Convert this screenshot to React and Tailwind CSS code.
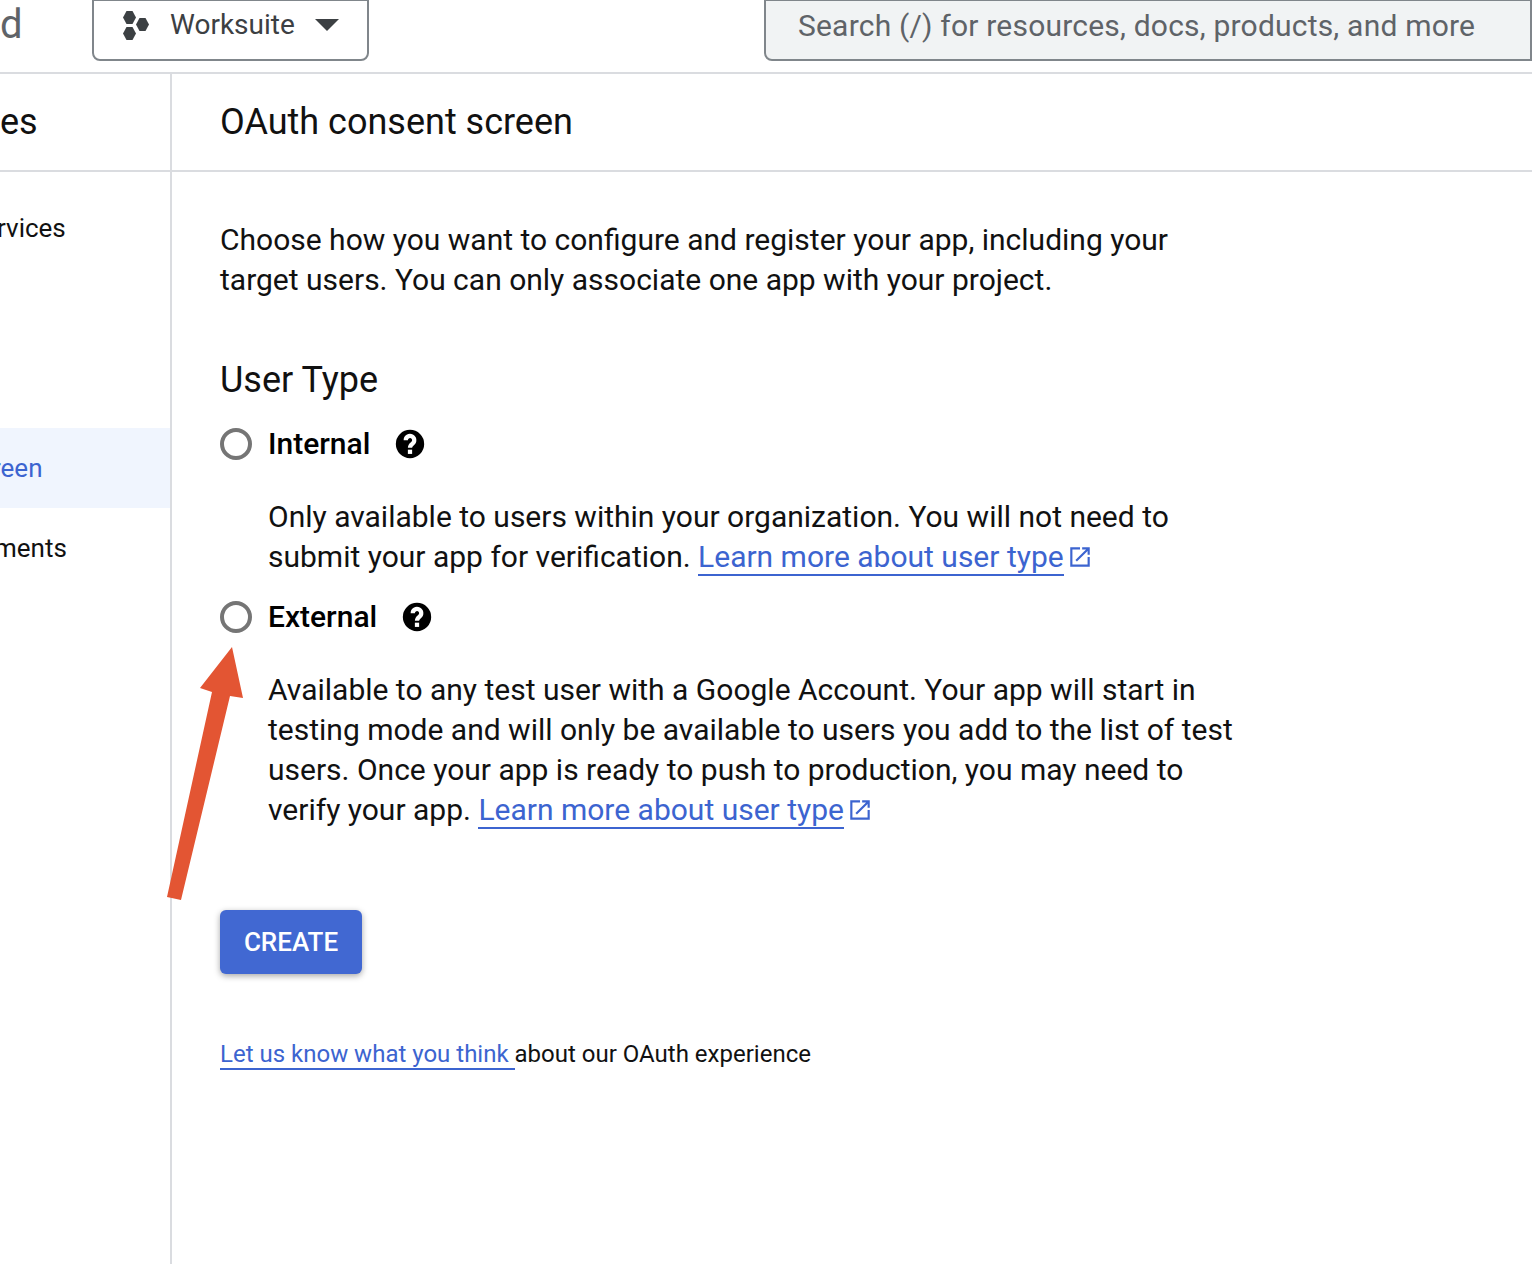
function HelpIcon() {
  return (
    <svg width="34" height="34" viewBox="0 0 24 24">
      <circle cx="12" cy="12" r="10" fill="#000" />
      <path d="M9 9.4a3 3 0 1 1 4.7 2.4c-1.1.8-1.7 1.4-1.7 2.9" fill="none" stroke="#fff" strokeWidth="3" />
      <rect x="10.5" y="16" width="3" height="3" fill="#fff" />
    </svg>
  );
}

function OpenInNew() {
  return (
    <svg className="inline-block ml-[3px] align-[-3px]" width="26" height="26" viewBox="0 0 24 24" fill="#3c64d0">
      <path d="M19 19H5V5h7V3H3v18h18v-9h-2v7zM14 3v2h3.59l-9.83 9.83 1.41 1.41L19 6.41V10h2V3h-7z" />
    </svg>
  );
}

function Radio({ label }) {
  return (
    <div className="flex items-center h-[40px]">
      <div className="w-8 h-8 rounded-full border-[4px] border-[#757575]" />
      <span className="ml-4 text-[30px] font-medium text-black">{label}</span>
      <span className="ml-[23px]">
        <HelpIcon />
      </span>
    </div>
  );
}

function LearnMore() {
  return (
    <>
      <a className="text-[#3c64d0] border-b-2 border-[#3c64d0]">Learn more about user type</a>
      <OpenInNew />
    </>
  );
}

export default function App() {
  return (
    <div className="relative h-[1264px] w-[1532px] overflow-hidden bg-white font-['Roboto',sans-serif] text-[#111]">
      <header className="flex h-[74px] border-b-2 border-[#dadce0]">
        <div className="w-[92px] text-[40px] leading-[50px] text-[#5f6368]">d</div>
        <div className="flex items-center w-[277px] h-[62px] -mt-[1px] border-2 border-[#80868b] rounded-b-[8px] pl-[28px] pb-[10px]">
          <svg width="28" height="30" viewBox="0 0 28 30" fill="#3c4043">
            <path d="M0 6.5L3.5 0h6L13 6.5 9.5 13h-6z" transform="translate(1 1)" />
            <path d="M0 6.5L3.5 0h6L13 6.5 9.5 13h-6z" transform="translate(14 8)" />
            <path d="M0 6.5L3.5 0h6L13 6.5 9.5 13h-6z" transform="translate(1 17)" />
          </svg>
          <span className="ml-[20px] text-[28px] text-[#3c4043]">Worksuite</span>
          <svg className="ml-[20px]" width="24" height="12" viewBox="0 0 24 12" fill="#3c4043">
            <path d="M0 0h24L12 12z" />
          </svg>
        </div>
        <div className="ml-[395px] flex-1 h-[62px] -mt-[1px] bg-[#f1f3f4] border-2 border-[#80868b] rounded-bl-[8px] pl-[32px] pb-[10px] flex items-center text-[30px] tracking-[0.2px] text-[#5f6368] whitespace-nowrap overflow-hidden">
          Search (/) for resources, docs, products, and more
        </div>
      </header>

      <div className="flex h-[1190px]">
        <aside className="w-[172px] shrink-0 border-r-2 border-[#dadce0] overflow-hidden whitespace-nowrap">
          <div className="h-[98px] border-b-2 border-[#dadce0] text-[36px] leading-[96px]">es</div>
          <div className="h-[256px] pt-[36px] text-[26px] leading-[40px] -ml-[3px]">rvices</div>
          <div className="h-[80px] bg-[#f0f5fe] text-[26px] leading-[80px] text-[#3c64d0]">
            <span className="-ml-[8px] inline-block">reen</span>
          </div>
          <div className="h-[80px] text-[26px] leading-[80px] -ml-[6px]">ments</div>
        </aside>

        <main className="flex-1 min-w-0">
          <div className="h-[98px] border-b-2 border-[#dadce0] pl-[48px] text-[36px] leading-[96px]">
            OAuth consent screen
          </div>
          <div className="pl-[48px] pt-[48px] w-[1070px] text-[30px] leading-[40px]">
            <p>
              Choose how you want to configure and register your app, including your target users. You can only associate one app with your project.
            </p>
            <h2 className="mt-[60px] text-[36px] leading-[40px]">User Type</h2>
            <div className="mt-[24px]">
              <Radio label="Internal" />
              <p className="mt-[33px] ml-[48px]">
                Only available to users within your organization. You will not need to submit your app for verification. <LearnMore />
              </p>
            </div>
            <div className="mt-[20px]">
              <Radio label="External" />
              <p className="mt-[33px] ml-[48px] w-[970px]">
                Available to any test user with a Google Account. Your app will start in testing mode and will only be available to users you add to the list of test users. Once your app is ready to push to production, you may need to verify your app. <LearnMore />
              </p>
            </div>
            <button className="mt-[80px] block w-[142px] h-[64px] rounded-[6px] bg-[#4168d2] text-white text-[26px] font-medium shadow-[0_2px_6px_rgba(0,0,0,0.35)]">
              CREATE
            </button>
            <p className="mt-[62px] text-[24px] leading-[36px] whitespace-nowrap">
              <a className="text-[#3c64d0] border-b-2 border-[#3c64d0]">Let us know what you think </a>
              about our OAuth experience
            </p>
          </div>
        </main>
      </div>

      {/* annotation arrow */}
      <svg className="absolute left-[160px] top-[640px]" width="90" height="265" viewBox="0 0 90 265">
        <path d="M72 7L83 58 70 56 21 260 7 257 52 52 40 48z" fill="#e35533" />
      </svg>
    </div>
  );
}
